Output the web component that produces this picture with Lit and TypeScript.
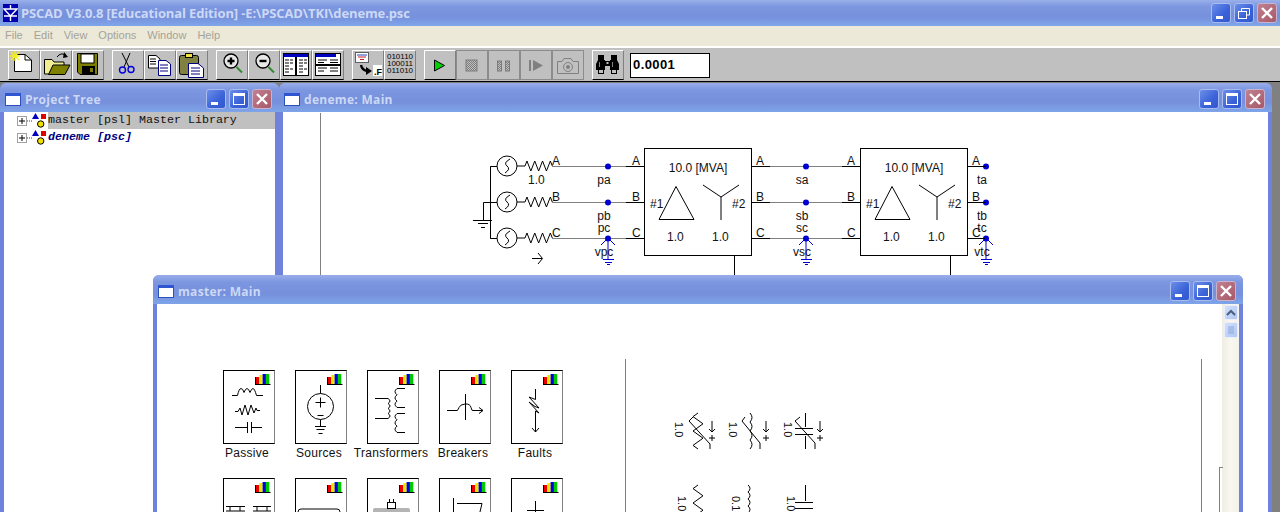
import { LitElement, html, css, svg } from 'lit';
import { customElement, property } from 'lit/decorators.js';

// zigzag resistor running from (x,y) to the right
const zigzag = (x: number, y: number, n: number, step: number, h: number) => {
    let d = `M${x} ${y}`;
    for (let i = 0; i < n; i++) {
        d += ` L${x + step * (i + 0.5)} ${y + (i % 2 ? h : -h)}`;
    }
    return d + ` L${x + step * n} ${y}`;
};

const zigzagV = (x: number, y: number, n: number, step: number, h: number) => {
    let d = `M${x} ${y}`;
    for (let i = 0; i < n; i++) {
        d += ` L${x + (i % 2 ? h : -h)} ${y + step * (i + 0.5)}`;
    }
    return d + ` L${x} ${y + step * n}`;
};

const coilV = (x: number, y: number, n: number, step: number, dir = 1) => {
    let d = `M${x} ${y}`;
    for (let i = 0; i < n; i++) {
        d += ` q${dir * 4} ${step / 2} 0 ${step}`;
    }
    return d;
};

const titleIcon = html`<svg class="ticon" width="16" height="13" viewBox="0 0 16 13">
  <rect x="0.5" y="0.5" width="15" height="12" fill="#fff" stroke="#2c4fc0"/>
  <rect x="0" y="0" width="16" height="3" fill="#2f56d0"/>
</svg>`;

const bars = svg`
  <rect x="33" y="7" width="3.300" height="7.500" fill="#e80000" stroke="none"/>
  <rect x="36.300" y="5" width="3.300" height="9.500" fill="#f4e800" stroke="none"/>
  <rect x="39.600" y="4" width="3.300" height="10.500" fill="#0000e0" stroke="none"/>
  <rect x="43" y="4" width="3.300" height="10.500" fill="#00c800" stroke="none"/>
  <path d="M32.500 14V7M32 14.500H47.500" stroke="#000"/>`;

const cardIcons: Record<string, unknown> = {
    passive: svg`
      <path d="M9 25.5H14.5 q1.5-7 3.5-7 t3 4 q1.5-4 3-4 t3 4 q1.5-4 3-4 t3.5 7 H40"/>
      <path d="M12 41.500H15L17 38L19 45L22 35L25 45L28 35L31 43L33 38L34 40.500H37"/>
      <path d="M12 57.5H24M24.5 52V63M28.5 52V63M29 57.5H39"/>`,
    sources: svg`
      <circle cx="25.5" cy="36.5" r="13"/>
      <path d="M25.5 15V23.5M20.5 32.5H30.5M25.5 27.5V37.5M22.5 45.5H28.5M25.5 49.5V56.5M20 56.5H31M21.5 59.5H29.5M23.5 63.5H27.5"/>`,
    transformers: svg`
      <path d="M8 28.5H21 M8 48.5H21"/>
      <path d="${coilV(21, 28.5, 4, 5)}"/>
      <path d="M38 18.5H30 M38 37.5H30"/>
      <path d="${coilV(30, 18.5, 3, 6.3, -1)}"/>
      <path d="M38 43.5H30 M38 62.5H30"/>
      <path d="${coilV(30, 43.5, 3, 6.3, -1)}"/>`,
    breakers: svg`
      <path d="M8 40.5H18 q1 0 2-3 t6-3.5 t6 3.5 t2 3 H44 M40 37.5L44 40.5L40 43.5"/>
      <path d="M26.5 24V50"/>`,
    faults: svg`
      <path d="M24.5 19V29.5L18 27L28 38L24 36.5L18 32L28 43L24.5 41V62M21 58L24.5 62L28 58"/>`,
    bus: svg`<path d="M3 28.5H22M30 28.5H48M7 28.5V33M17 28.5V33M34 28.5V33M44 28.5V33M3 33H22M30 33H48"/>`,
    lines: svg`<path d="M3 45V34Q3 31 6 31H42Q45 31 45 34V45"/>`,
    machine: svg`
      <rect x="6" y="30" width="37" height="30" rx="2" fill="#b4b4b4" stroke="none"/>
      <rect x="20.5" y="24.5" width="8" height="6" fill="#fff"/>
      <path d="M22.5 21V24M26.5 21V24"/>`,
    scopes: svg`<path d="M14.5 20V60M18 25.5H43L40 38M14.5 45H18"/>`,
    meters: svg`<path d="M24.5 23V60M16 32.5H33M16 36.5H33"/>`
};

const palette = [
    { label: 'Passive', icon: 'passive' },
    { label: 'Sources', icon: 'sources' },
    { label: 'Transformers', icon: 'transformers' },
    { label: 'Breakers', icon: 'breakers' },
    { label: 'Faults', icon: 'faults' },
    { label: '', icon: 'bus' },
    { label: '', icon: 'lines' },
    { label: '', icon: 'machine' },
    { label: '', icon: 'scopes' },
    { label: '', icon: 'meters' }
];

// toolbar glyphs, all in a 32x30 box
const toolIcons: Record<string, unknown> = {
    new: svg`
      <path d="M6.5 4.5H17L23.5 10V21.5H6.5Z" fill="#fff" stroke="#000"/>
      <path d="M17 4.5V10H23.5" fill="none" stroke="#000"/>
      <path d="M2 6H12M7 1V11M3 2L11 10M11 2L3 10" stroke="#f6ee20" stroke-width="1.4"/>`,
    open: svg`
      <path d="M4.5 9.5H12L14 12H24V24H4.5Z" fill="#f0ee90" stroke="#000"/>
      <path d="M8.5 24.5L13 15H30L25 24.5Z" fill="#808000" stroke="#000"/>
      <path d="M17 7Q21 2 25 5" fill="none" stroke="#000"/><path d="M24 2L28 7L23 8Z" fill="#000"/>`,
    save: svg`
      <path d="M5.5 3.5H25.5V24.5H8L5.5 22Z" fill="#808000" stroke="#000"/>
      <rect x="9" y="4" width="13" height="9" fill="#fff" stroke="#000"/>
      <rect x="10" y="16" width="13" height="8" fill="#000"/>
      <rect x="18" y="18" width="3" height="4" fill="#808000"/>`,
    cut: svg`
      <path d="M10 3L17 17M18 3L12 17" stroke="#000" fill="none"/>
      <circle cx="10.5" cy="20" r="3" fill="none" stroke="#0000e0" stroke-width="1.4"/>
      <circle cx="19" cy="19.5" r="3" fill="none" stroke="#0000e0" stroke-width="1.4"/>`,
    copy: svg`
      <path d="M4.5 5.5H12L16 9V18H4.5Z" fill="#fff" stroke="#000"/>
      <path d="M6 9H12M6 11.5H12M6 14H12" stroke="#000"/>
      <path d="M14.5 10.5H22L26.5 14V25.5H14.5Z" fill="#fff" stroke="#000080"/>
      <path d="M16 15H24M16 18H24M16 21H24" stroke="#000080"/>`,
    paste: svg`
      <rect x="3.5" y="5.5" width="19" height="19" rx="2" fill="#808040" stroke="#000"/>
      <rect x="9.5" y="3.5" width="7" height="4" fill="#f0e040" stroke="#000"/>
      <path d="M12.5 13.5H22L27.5 18V27.5H12.5Z" fill="#fff" stroke="#000080"/>
      <path d="M15 18H24M15 21H24M15 24H24" stroke="#000080"/>`,
    zoomin: svg`
      <circle cx="15" cy="11" r="7" fill="#e8e8e8" stroke="#000" stroke-width="1.3"/>
      <path d="M11.5 11H18.5M15 7.500V14.500" stroke="#000" stroke-width="2.4"/>
      <path d="M20.5 17L26 22.5" stroke="#308830" stroke-width="2"/>`,
    zoomout: svg`
      <circle cx="15" cy="11" r="7" fill="#e8e8e8" stroke="#000" stroke-width="1.3"/>
      <path d="M11.5 11H18.5" stroke="#000" stroke-width="2.4"/>
      <path d="M20.5 17L26 22.5" stroke="#308830" stroke-width="2"/>`,
    cols: svg`
      <rect x="3.5" y="3.5" width="25" height="22" fill="#fff" stroke="#000"/>
      <rect x="4" y="4" width="24" height="3" fill="#0000c0"/>
      <path d="M15.5 7V25M16.5 7V25" stroke="#000"/>
      <path d="M5 10H13M5 13H13M5 16H10M5 19H13M5 22H10M19 10H27M19 13H27M19 16H24M19 19H27M19 22H24" stroke="#000" stroke-dasharray="4 1"/>`,
    rows: svg`
      <rect x="3.5" y="3.5" width="25" height="22" fill="#fff" stroke="#000"/>
      <rect x="4" y="4" width="20" height="3" fill="#0000c0"/>
      <path d="M4 14.5H28M4 15.5H28" stroke="#000"/>
      <path d="M6 10H15M18 10H26M6 12.5H12M18 12.5H26M6 18H15M18 18H26M6 21H12M18 21H26" stroke="#000"/>`,
    fortran: svg`
      <rect x="3.5" y="2.5" width="13" height="10" fill="#fff" stroke="#606060"/>
      <path d="M6 7H14M8 9.5H12" stroke="#c02020"/><path d="M5 5H15" stroke="#2040c0"/>
      <path d="M9 15Q10 20 15 21" fill="none" stroke="#000" stroke-width="2.4"/>
      <path d="M14 17L20 21L14 25Z" fill="#000"/>
      <rect x="21" y="15" width="9" height="11" fill="#fff"/>
      <text class="tiny" x="22" y="25">.F</text>`,
    play: svg`<path d="M10.5 10V21L20.5 15.5Z" fill="#00d000" stroke="#000"/>`,
    stop: svg`<rect x="10" y="10" width="11" height="11" fill="url(#dots)" stroke="#7c7c7c"/>`,
    pause: svg`
      <rect x="9.5" y="11" width="4" height="10" fill="url(#dots)" stroke="#7c7c7c"/>
      <rect x="17.5" y="11" width="4" height="10" fill="url(#dots)" stroke="#7c7c7c"/>`,
    step: svg`<path d="M10 10V21" stroke="#808080" stroke-width="2"/><path d="M13 10V21L23 15.5Z" fill="#808080"/>`,
    camera: svg`
      <path d="M5.5 11.5H10L12 8.5H19L21 11.5H26.5V23.5H5.5Z" fill="none" stroke="#808080"/>
      <circle cx="16" cy="17" r="4.5" fill="none" stroke="#808080"/>
      <circle cx="16" cy="17" r="2" fill="#808080"/>`,
    find: svg`
      <rect x="6" y="5" width="6" height="6" fill="#000"/>
      <rect x="19" y="5" width="6" height="6" fill="#000"/>
      <path d="M6 10H13V20H4V14Z M25 10H18V20H27V14Z" fill="#000"/>
      <rect x="13" y="11" width="5" height="5" fill="#000"/>
      <rect x="14.500" y="12" width="2" height="2" fill="#c0c0c0"/>
      <rect x="6.500" y="19.500" width="5" height="4" fill="#c0c0c0" stroke="#000"/>
      <rect x="19.500" y="19.500" width="5" height="4" fill="#c0c0c0" stroke="#000"/>
      <path d="M7.500 12V17M20.500 12V17" stroke="#808080"/>`
};

const toolGroups: { id: string; off?: boolean }[][] = [
    [{ id: 'new' }, { id: 'open' }, { id: 'save' }],
    [{ id: 'cut' }, { id: 'copy' }, { id: 'paste' }],
    [{ id: 'zoomin' }, { id: 'zoomout' }, { id: 'cols' }, { id: 'rows' }],
    [{ id: 'fortran' }, { id: 'binary' }],
    [{ id: 'play' }, { id: 'stop', off: true }, { id: 'pause', off: true }, { id: 'step', off: true }, { id: 'camera', off: true }],
    [{ id: 'find' }]
];

@customElement('win-buttons')
export class WinButtons extends LitElement {
    @property({ type: Boolean }) restore = false;

    static styles = css`
    :host { display: flex; gap: 3px; }
    .b {
      width: 20px;
      height: 20px;
      box-sizing: border-box;
      border: 1px solid #a8bcf0;
      border-radius: 3px;
      background: linear-gradient(135deg, #6c8ee8, #3a62d8 60%, #3258cc);
      display: flex;
    }
    .close { background: linear-gradient(135deg, #c08090, #a85868); border-color: #c8b4cc; }
    svg { display: block; }
    path, rect { fill: none; stroke: #fff; }
    .solid { fill: #fff; stroke: none; }
    `;

    render() {
        return html`
      <div class="b"><svg width="18" height="18"><rect class="solid" x="4" y="12" width="7" height="3"/></svg></div>
      <div class="b"><svg width="18" height="18">
        ${this.restore
                ? svg`<rect x="3.5" y="7.5" width="8" height="7"/><path d="M6.5 7V4.5H14.5V11H12"/>`
                : svg`<rect x="3.5" y="3.5" width="11" height="11"/><rect class="solid" x="3" y="3" width="12" height="3"/>`}
      </svg></div>
      <div class="b close"><svg width="18" height="18"><path d="M4 4L14 14M14 4L4 14" stroke-width="2.4"/></svg></div>
    `;
    }
}

@customElement('mdi-window')
export class MdiWindow extends LitElement {
    @property({ type: String }) heading = '';

    static styles = css`
    :host {
      position: absolute;
      display: flex;
      flex-direction: column;
      box-sizing: border-box;
      background: #6f82dc;
      border-radius: 6px 6px 0 0;
      overflow: hidden;
    }
    .bar {
      height: 29px;
      box-sizing: border-box;
      flex: none;
      display: flex;
      align-items: center;
      padding: 3px 7px 0 5px;
      gap: 4px;
      background: linear-gradient(#98aeea 0, #7c96e0 25%, #7690dc 65%, #7fa4e8 100%);
    }
    .name {
      flex: 1;
      font: bold 12px "Open Sans", sans-serif;
      letter-spacing: 0.3px;
      color: #ccd9f6;
    }
    .body {
      flex: 1;
      min-height: 0;
      margin: 0 4px;
      background: #fff;
      position: relative;
      overflow: hidden;
    }
    svg { display: block; }
    `;

    render() {
        return html`
      <div class="bar">
        ${titleIcon}
        <span class="name">${this.heading}</span>
        <win-buttons></win-buttons>
      </div>
      <div class="body"><slot></slot></div>
    `;
    }
}

@customElement('app-root')
export class AppRoot extends LitElement {
    static styles = css`
    :host {
      display: block;
      position: relative;
      width: 1280px;
      height: 512px;
      overflow: hidden;
      background: #808080;
      font-family: "Liberation Sans", Arial, sans-serif;
    }
    .appbar {
      height: 26px;
      display: flex;
      align-items: center;
      gap: 3px;
      padding: 0 3px;
      box-sizing: border-box;
      background: linear-gradient(#9ab0ea 0, #7d97e0 25%, #7690dc 65%, #7fa6ea 100%);
    }
    .apptitle {
      flex: 1;
      font: bold 13px "Open Sans", sans-serif;
      letter-spacing: -0.13px;
      color: #ccd9f6;
    }
    .menu {
      height: 20px;
      box-sizing: border-box;
      padding: 0 0 2px 5px;
      background: #ece9d8;
      display: flex;
      align-items: center;
      gap: 11px;
      font-size: 11px;
      color: #a4a39a;
    }
    .toolbar {
      height: 36px;
      box-sizing: border-box;
      border-top: 2px solid #fff;
      border-bottom: 1px solid #000;
      background: #c0c0c0;
      display: flex;
      align-items: center;
      padding: 1px 0 0 8px;
      gap: 8px;
    }
    .group { display: flex; }
    .tool {
      width: 32px;
      height: 30px;
      box-sizing: border-box;
      background: #c0c0c0;
      border: 1px solid;
      border-color: #fff #808080 #000 #fff;
    }
    .tool.off { border-color: #8c8c8c; }
    .tool svg { display: block; margin: -1px 0 0 -1px; }
    .binary {
      font: 8px/7px "Liberation Sans", sans-serif;
      text-align: center;
      padding-top: 2px;
    }
    .tiny { font: bold 9px "Liberation Sans", sans-serif; }
    .step-input {
      width: 80px;
      height: 25px;
      margin-left: -2px;
      box-sizing: border-box;
      background: #fff;
      border: 1px solid #000;
      font: bold 13px "Liberation Sans", sans-serif;
      letter-spacing: 0.4px;
      padding: 3px 2px;
    }
    .tree { font: 11.67px/17px "Liberation Mono", monospace; }
    .row { display: flex; align-items: center; height: 17px; color: #111; }
    .row.sel .label { background: #c0c0c0; flex: 1; }
    .row.sel { height: 16px; margin-bottom: 1px; }
    .row.proj .label { color: #000080; font-weight: bold; font-style: italic; }
    .twist { width: 44px; height: 17px; flex: none; display: block; }
    .schem { display: block; }
    .wire { stroke: #000; fill: none; }
    .gray { stroke: #808080; fill: none; }
    .blue { stroke: #0000d0; fill: none; }
    .dot { fill: #0000d0; }
    .sch-text {
      font: 12px "Liberation Sans", sans-serif;
      fill: #111;
    }
    .sch-text.turned { font-size: 11px; }
    .masterbody { display: flex; height: 208px; }
    .palette {
      width: 468px;
      box-sizing: border-box;
      padding: 66px 0 0 66px;
      display: grid;
      grid-template-columns: repeat(5, 52px);
      grid-auto-rows: 74px;
      column-gap: 20px;
      row-gap: 34px;
    }
    .item { position: relative; }
    .card {
      width: 52px;
      height: 74px;
      box-sizing: border-box;
      border: 1px solid #000;
      border-right-color: #808080;
      background: #fff;
    }
    .card svg { display: block; fill: none; stroke: #000; }
    .caption {
      position: absolute;
      top: 76px;
      left: -22px;
      right: -18px;
      text-align: center;
      font-size: 12px;
      letter-spacing: 0.3px;
      color: #111;
    }
    .panel {
      flex: none;
      width: 577px;
      box-sizing: border-box;
      margin-top: 55px;
      border-left: 1px solid #808080;
      border-right: 1px solid #808080;
    }
    .gap { flex: 1; position: relative; }
    .mark {
      position: absolute;
      left: 17px;
      top: 163px;
      bottom: 0;
      width: 3px;
      border: 0 solid #808080;
      border-width: 1px 0 0 1px;
    }
    .scroll {
      width: 17px;
      flex: none;
      background: linear-gradient(90deg, #f0eee2, #f8f7f0 50%, #f4f3ea);
      padding: 1px 1px 0 2px;
      box-sizing: border-box;
    }
    .sbtn {
      height: 15px;
      box-sizing: border-box;
      border: 1px solid #e8eefc;
      border-radius: 2px;
      background: linear-gradient(135deg, #d4e0fa, #b0c6f4);
      margin-bottom: 2px;
    }
    .sbtn svg { display: block; }
    .thumb { height: 16px; }
    `;

    private renderTool(t: { id: string; off?: boolean }) {
        if (t.id === 'binary') {
            return html`<div class="tool binary">010110<br />100011<br />011010</div>`;
        }
        return html`<div class="tool ${t.off ? 'off' : ''}">
      <svg width="32" height="30" viewBox="0 0 32 30">
        <defs>
          <pattern id="dots" width="2" height="2" patternUnits="userSpaceOnUse">
            <rect width="2" height="2" fill="#c0c0c0"/><rect width="1" height="1" fill="#7c7c7c"/><rect x="1" y="1" width="1" height="1" fill="#7c7c7c"/>
          </pattern>
        </defs>
        ${toolIcons[t.id]}
      </svg>
    </div>`;
    }

    private treeRow(name: string, cls: string) {
        return html`<div class="row ${cls}">
      <svg class="twist" viewBox="0 0 44 17" width="44" height="17">
        <rect x="13.5" y="4.5" width="9" height="9" fill="#fff" stroke="#404040" stroke-dasharray="1 1"/>
        <path d="M15 9H21M18 6V12" stroke="#000"/>
        <path d="M23 9H28" stroke="#404040" stroke-dasharray="1 1"/>
        <path d="M31.500 1L35 7H28Z" fill="#0000c0"/>
        <rect x="37" y="2" width="5" height="5" fill="#e00000"/>
        <circle cx="36.700" cy="12" r="3.200" fill="#f0e000" stroke="#000"/>
      </svg>
      <span class="label">${name}</span>
    </div>`;
    }

    private renderSource(y: number, label: string) {
        return svg`
      <circle class="wire" cx="507" cy="${y}" r="10"/>
      <path class="wire" d="M510 ${y - 7}Q503 ${y - 3} 507 ${y}T505 ${y + 7}"/>
      <path class="wire" d="M517 ${y}H525 ${zigzag(525, y, 7, 3.9, 5).replace('M525 ' + y, 'M525 ' + y)}"/>
      <path class="gray" d="M552 ${y + 0.5}H626"/>
      <path class="wire" d="M626 ${y + 0.5}H644"/>
      <path class="wire" d="M490.5 ${y + 0.5}H497"/>
      <text class="sch-text" x="552" y="${y - 1}">${label}</text>
      <text class="sch-text" x="632" y="${y - 1}">${label}</text>
      <circle class="dot" cx="608" cy="${y + 0.5}" r="3"/>`;
    }

    private renderTransformer(x: number, wireEnd: number) {
        // x is the left edge of the box, 108 wide
        const ys = [166, 202, 238];
        const names = ['A', 'B', 'C'];
        return svg`
      <rect class="wire" x="${x + 0.5}" y="148.5" width="107" height="107"/>
      <text class="sch-text" x="${x + 54}" y="172" text-anchor="middle">10.0 [MVA]</text>
      <path class="wire" d="M${x + 32} 186.5L${x + 15} 219.5H${x + 50}Z"/>
      <path class="wire" d="M${x + 59} 185L${x + 77} 197L${x + 95} 185M${x + 77} 197V220"/>
      <text class="sch-text" x="${x + 6}" y="208">#1</text>
      <text class="sch-text" x="${x + 88}" y="208">#2</text>
      <text class="sch-text" x="${x + 23}" y="241">1.0</text>
      <text class="sch-text" x="${x + 68}" y="241">1.0</text>
      <path class="wire" d="M${x + 90.5} 256V275"/>
      ${ys.map((y, i) => svg`
        <path class="wire" d="M${x + 108} ${y + 0.5}H${x + 126}"/>
        <text class="sch-text" x="${x + 112}" y="${y - 1}">${names[i]}</text>
        ${wireEnd > 0 ? svg`<path class="gray" d="M${x + 126} ${y + 0.5}H${wireEnd}"/>` : ''}
      `)}
    `;
    }

    private renderProbe(x: number, letter: string) {
        return svg`
      <text class="sch-text" x="${x}" y="184" text-anchor="middle">${letter}a</text>
      <text class="sch-text" x="${x}" y="220" text-anchor="middle">${letter}b</text>
      <text class="sch-text" x="${x}" y="232" text-anchor="middle">${letter}c</text>
      <text class="sch-text" x="${x}" y="256" text-anchor="middle">v${letter}c</text>
      <path class="blue" d="M${x + 4} 238L${x - 3} 245M${x + 4} 238L${x + 11} 245M${x + 4} 238V259"/>
      <path class="blue" d="M${x - 1} 259.5H${x + 10}M${x + 1} 262.5H${x + 8}M${x + 3} 264.5H${x + 6}"/>`;
    }

    private renderSchematic() {
        return html`<svg class="schem" width="985" height="163" viewBox="283 112 985 163">
      <path class="gray" d="M320.5 113V275"/>
      <path class="wire" d="M497 166.5H490.5V238.5H497"/>
      <path class="wire" d="M497 202.5H483.5V220M473 220.5H492M478 223.5H488M481 227.5H485"/>
      ${this.renderSource(166, 'A')}
      ${this.renderSource(202, 'B')}
      ${this.renderSource(238, 'C')}
      <text class="sch-text" x="528" y="184">1.0</text>
      <path class="wire" d="M532 258.5H542M538 253L542.500 258.500L538 264"/>
      ${this.renderProbe(604, 'p')}
      ${this.renderTransformer(644, 842)}
      ${[166, 202, 238].map(y => svg`
        <path class="wire" d="M842 ${y + 0.5}H860"/>
        <circle class="dot" cx="806" cy="${y + 0.5}" r="3"/>
        <circle class="dot" cx="986" cy="${y + 0.5}" r="3"/>
      `)}
      <text class="sch-text" x="847" y="165">A</text>
      <text class="sch-text" x="847" y="201">B</text>
      <text class="sch-text" x="847" y="237">C</text>
      ${this.renderProbe(802, 's')}
      ${this.renderTransformer(860, 0)}
      ${this.renderProbe(982, 't')}
    </svg>`;
    }

    private renderCtrl(x: number, y: number) {
        // little control arrow with its plus sign, next to the variable elements
        return svg`<path d="M${x} ${y}V${y + 11}M${x - 3} ${y + 8}L${x} ${y + 11}L${x + 3} ${y + 8}M${x - 3} ${y + 17}H${x + 3}M${x} ${y + 14}V${y + 20}"/>`;
    }

    private renderElements() {
        return html`<svg class="schem" width="575" height="153" viewBox="626 359 575 153" fill="none" stroke="#000">
      <path d="${zigzagV(698, 413, 5, 7.2, 5)}"/>
      <path d="M693 417L689 421L710 444V449"/>
      ${this.renderCtrl(712, 421)}
      <path d="${coilV(750, 413, 4, 9, 1)}"/>
      <path d="M745 417L742 421L760 443V449"/>
      ${this.renderCtrl(766, 421)}
      <path d="M805.500 413V427M795 428.500H813M795 434.500H813M805.500 436V449"/>
      <path d="M800 417L795 421L815 443V449"/>
      ${this.renderCtrl(820, 421)}
      <path d="${zigzagV(698, 485, 5, 7.2, 5)}"/>
      <path d="${coilV(748, 485, 5, 7, 1)}"/>
      <path d="M805.500 485V501M795 502.500H813M795 508.500H813"/>
      <text class="sch-text turned" stroke="none" transform="translate(675 422) rotate(90)">1.0</text>
      <text class="sch-text turned" stroke="none" transform="translate(729 422) rotate(90)">1.0</text>
      <text class="sch-text turned" stroke="none" transform="translate(784 422) rotate(90)">1.0</text>
      <text class="sch-text turned" stroke="none" transform="translate(678 496) rotate(90)">1.0</text>
      <text class="sch-text turned" stroke="none" transform="translate(732 496) rotate(90)">0.1</text>
      <text class="sch-text turned" stroke="none" transform="translate(787 496) rotate(90)">1.0</text>
    </svg>`;
    }

    render() {
        return html`
      <div class="appbar">
        <svg width="15" height="18" viewBox="0 0 15 18">
          <rect width="15" height="18" fill="#0000b0"/>
          <path d="M7.500 1V5M1 5H14L7.500 12ZM1 12H14M7.500 12V17" fill="none" stroke="#fff" stroke-width="1.4"/>
        </svg>
        <span class="apptitle">PSCAD V3.0.8 [Educational Edition] -E:\\PSCAD\\TKI\\deneme.psc</span>
        <win-buttons restore></win-buttons>
      </div>
      <div class="menu">
        ${['File', 'Edit', 'View', 'Options', 'Window', 'Help'].map(m => html`<span>${m}</span>`)}
      </div>
      <div class="toolbar">
        ${toolGroups.map(g => html`<div class="group">${g.map(t => this.renderTool(t))}</div>`)}
        <div class="step-input">0.0001</div>
      </div>

      <mdi-window heading="Project Tree" style="left:0;top:83px;width:279px;height:440px">
        <div class="tree">
          ${this.treeRow('master [psl] Master Library', 'sel')}
          ${this.treeRow('deneme [psc]', 'proj')}
        </div>
      </mdi-window>

      <mdi-window heading="deneme: Main" style="left:279px;top:83px;width:993px;height:440px">
        ${this.renderSchematic()}
      </mdi-window>

      <mdi-window heading="master: Main" style="left:153px;top:275px;width:1090px;height:250px">
        <div class="masterbody">
          <div class="palette">
            ${palette.map(p => html`<div class="item">
              <div class="card">
                <svg width="50" height="72" viewBox="1 1 50 72">${bars}${cardIcons[p.icon]}</svg>
              </div>
              ${p.label ? html`<div class="caption">${p.label}</div>` : ''}
            </div>`)}
          </div>
          <div class="panel">${this.renderElements()}</div>
          <div class="gap"><div class="mark"></div></div>
          <div class="scroll">
            <div class="sbtn"><svg width="12" height="13"><path d="M2 9L6 5L10 9" fill="none" stroke="#4a6080" stroke-width="2"/></svg></div>
            <div class="sbtn thumb"><svg width="12" height="14"><path d="M3 4H9M3 6H9M3 8H9M3 10H9" stroke="#8aa4dc"/></svg></div>
          </div>
        </div>
      </mdi-window>
    `;
    }
}
